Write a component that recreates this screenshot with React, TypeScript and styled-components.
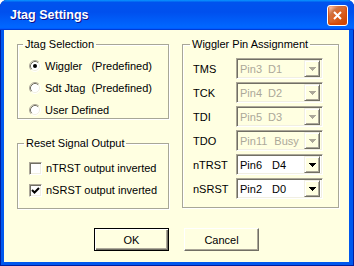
import styled, { createGlobalStyle } from 'styled-components';

const GlobalStyle = createGlobalStyle`
  html, body {
    margin: 0;
    padding: 0;
    background: #ffffff;
  }
  body {
    font-family: "Liberation Sans", Arial, sans-serif;
    font-size: 11px;
    color: #000;
  }
`;

const StWindow = styled.div`
  width: 354px;
  height: 266px;
  box-sizing: border-box;
  display: flex;
  flex-direction: column;
  background: #0058ee;
  box-shadow: inset 1px 0 0 #001ea0, inset -1px 0 0 #001ea0, inset 0 -1px 0 #001ea0;
  border-radius: 7px 7px 0 0;
  overflow: hidden;
`;

const StTitleBar = styled.div`
  height: 30px;
  flex: none;
  display: flex;
  align-items: center;
  justify-content: space-between;
  padding: 0 6px 0 10px;
  background: linear-gradient(
    180deg,
    #0997ff,
    #0053ee 8%,
    #0050ee 40%,
    #0066ff 88%,
    #0066ff 93%,
    #005bff 95%,
    #003dd7 96%,
    #003dd7
  );

  .title {
    color: #fff;
    font-weight: bold;
    font-size: 12.5px;
    text-shadow: 1px 1px #0f1089;
  }
`;

const StClose = styled.div`
  width: 21px;
  height: 21px;
  box-sizing: border-box;
  border: 1px solid #fff;
  border-radius: 3px;
  display: flex;
  align-items: center;
  justify-content: center;
  background: radial-gradient(circle at 90% 90%, #cc4600 0, #dc6527 55%, #cd7546 70%, #ffccb2 90%, #fff 100%);
  box-shadow: inset 0 -1px 2px 1px #da4600;
`;

const StBody = styled.div`
  flex: 1;
  margin: 0 5px 4px 4px;
  background: #ffffe1;
  padding: 8px 10px 0 13px;
  display: flex;
  flex-direction: column;
`;

const StColumns = styled.div`
  display: flex;
  gap: 13px;
  align-items: flex-start;
`;

const StLeftCol = styled.div`
  display: flex;
  flex-direction: column;
  gap: 18px;
`;

const StGroup = styled.fieldset<{ $w: number; $h: number; $lead: number }>`
  margin: 0;
  padding: 0;
  width: ${(p) => p.$w}px;
  height: ${(p) => p.$h}px;
  box-sizing: border-box;
  border: 1px solid #a8a797;
  box-shadow: 1px 1px 0 #fff, inset 1px 1px 0 #fff;
  min-width: 0;

  legend {
    margin-left: ${(p) => p.$lead}px;
    padding: 0 2px;
    line-height: 13px;
    height: 13px;
  }
`;

const StGroupContent = styled.div<{ $top: number; $left: number; $gap: number }>`
  display: flex;
  flex-direction: column;
  gap: ${(p) => p.$gap}px;
  padding-top: ${(p) => p.$top}px;
  padding-left: ${(p) => p.$left}px;
`;

const StOption = styled.div`
  display: flex;
  align-items: center;
  gap: 4px;
  height: 14px;
  white-space: pre;
`;

const StCheckBox = styled.div`
  width: 13px;
  height: 13px;
  box-sizing: border-box;
  border: 1px solid;
  border-color: #aca899 #ffffff #ffffff #aca899;
  box-shadow: inset 1px 1px 0 #716f64, inset -1px -1px 0 #f1efe2;
  background: #fff;
  display: flex;
  align-items: center;
  justify-content: center;
`;

const StPinRow = styled.div`
  display: flex;
  align-items: center;
  height: 21px;

  .pinLabel {
    width: 43px;
  }
`;

const StCombo = styled.div<{ $disabled?: boolean }>`
  width: 87px;
  height: 21px;
  box-sizing: border-box;
  display: flex;
  align-items: center;
  border: 1px solid;
  border-color: #aca899 #ffffff #ffffff #aca899;
  box-shadow: inset 1px 1px 0 #716f64, inset -1px -1px 0 #f1efe2;
  background: ${(p) => (p.$disabled ? '#ffffe1' : '#ffffff')};
  padding: 2px 2px 2px 3px;

  .comboText {
    flex: 1;
    display: flex;
    white-space: pre;
    color: ${(p) => (p.$disabled ? '#aca899' : '#000')};
  }
`;

const StSignal = styled.span<{ $gap: number }>`
  margin-left: ${(p) => p.$gap}px;
`;

const StDropButton = styled.div`
  width: 16px;
  height: 17px;
  box-sizing: border-box;
  border: 1px solid;
  border-color: #f1efe2 #716f64 #716f64 #f1efe2;
  box-shadow: inset 1px 1px 0 #fff, inset -1px -1px 0 #aca899;
  background: #ffffe1;
  display: flex;
  align-items: center;
  justify-content: center;
`;

const StButtons = styled.div`
  display: flex;
  justify-content: center;
  gap: 15px;
  margin-top: 19px;
  margin-left: -3px;
`;

const StButton = styled.div<{ $default?: boolean }>`
  width: 75px;
  height: 23px;
  box-sizing: border-box;
  display: flex;
  align-items: center;
  justify-content: center;
  background: #ffffe1;
  border: 1px solid;
  border-color: ${(p) => (p.$default ? '#000' : '#fff #716f64 #716f64 #fff')};
  box-shadow: ${(p) =>
    p.$default
      ? 'inset 1px 1px 0 #fff, inset -1px -1px 0 #716f64, inset -2px -2px 0 #aca899'
      : 'inset -1px -1px 0 #aca899'};
`;

const Radio = ({ checked }: { checked?: boolean }) => (
  <svg width="12" height="12" viewBox="0 0 12 12">
    <circle cx="6" cy="6" r="4.5" fill="#fff" />
    <path d="M2.11 9.89 A5.5 5.5 0 0 1 9.89 2.11" fill="none" stroke="#aca899" />
    <path d="M9.89 2.11 A5.5 5.5 0 0 1 2.11 9.89" fill="none" stroke="#fff" />
    <path d="M2.82 9.18 A4.5 4.5 0 0 1 9.18 2.82" fill="none" stroke="#716f64" />
    <path d="M9.18 2.82 A4.5 4.5 0 0 1 2.82 9.18" fill="none" stroke="#f1efe2" />
    {checked && <circle cx="6" cy="6" r="2" fill="#000" />}
  </svg>
);

const Check = () => (
  <svg width="9" height="9" viewBox="0 0 9 9">
    <path d="M1 4 L3.5 6.5 L8 2" fill="none" stroke="#000" strokeWidth="2" />
  </svg>
);

const Arrow = ({ disabled }: { disabled?: boolean }) => (
  <svg width="7" height="4" viewBox="0 0 7 4" shapeRendering="crispEdges">
    <path d="M0 0 H7 V1 H6 V2 H5 V3 H4 V4 H3 V3 H2 V2 H1 V1 H0 Z" fill={disabled ? '#aca899' : '#000'} />
  </svg>
);

const pins = [
  { name: 'TMS', pin: 'Pin3', signal: 'D1', gap: 6, disabled: true },
  { name: 'TCK', pin: 'Pin4', signal: 'D2', gap: 6, disabled: true },
  { name: 'TDI', pin: 'Pin5', signal: 'D3', gap: 6, disabled: true },
  { name: 'TDO', pin: 'Pin11', signal: 'Busy', gap: 7, disabled: true },
  { name: 'nTRST', pin: 'Pin6', signal: 'D4', gap: 10, disabled: false },
  { name: 'nSRST', pin: 'Pin2', signal: 'D0', gap: 10, disabled: false },
];

export default function App() {
  return (
    <>
      <GlobalStyle />
      <StWindow>
        <StTitleBar>
          <span className="title">Jtag Settings</span>
          <StClose>
            <svg width="11" height="11" viewBox="0 0 11 11">
              <path d="M2 2 L9 9 M9 2 L2 9" stroke="#fff" strokeWidth="2" />
            </svg>
          </StClose>
        </StTitleBar>
        <StBody>
          <StColumns>
            <StLeftCol>
              <StGroup $w={152} $h={81} $lead={5}>
                <legend>Jtag Selection</legend>
                <StGroupContent $top={8} $left={11} $gap={8}>
                  <StOption>
                    <Radio checked />
                    <span>Wiggler   (Predefined)</span>
                  </StOption>
                  <StOption>
                    <Radio />
                    <span>Sdt Jtag  (Predefined)</span>
                  </StOption>
                  <StOption>
                    <Radio />
                    <span>User Defined</span>
                  </StOption>
                </StGroupContent>
              </StGroup>
              <StGroup $w={152} $h={72} $lead={6}>
                <legend>Reset Signal Output</legend>
                <StGroupContent $top={11} $left={11} $gap={8}>
                  <StOption>
                    <StCheckBox />
                    <span>nTRST output inverted</span>
                  </StOption>
                  <StOption>
                    <StCheckBox>
                      <Check />
                    </StCheckBox>
                    <span>nSRST output inverted</span>
                  </StOption>
                </StGroupContent>
              </StGroup>
            </StLeftCol>
            <StGroup $w={157} $h={170} $lead={7}>
              <legend>Wiggler Pin Assignment</legend>
              <StGroupContent $top={7} $left={10} $gap={3}>
                {pins.map((p) => (
                  <StPinRow key={p.name}>
                    <span className="pinLabel">{p.name}</span>
                    <StCombo $disabled={p.disabled}>
                      <span className="comboText">
                        <span>{p.pin}</span>
                        <StSignal $gap={p.gap}>{p.signal}</StSignal>
                      </span>
                      <StDropButton>
                        <Arrow disabled={p.disabled} />
                      </StDropButton>
                    </StCombo>
                  </StPinRow>
                ))}
              </StGroupContent>
            </StGroup>
          </StColumns>
          <StButtons>
            <StButton $default>OK</StButton>
            <StButton>Cancel</StButton>
          </StButtons>
        </StBody>
      </StWindow>
    </>
  );
}
